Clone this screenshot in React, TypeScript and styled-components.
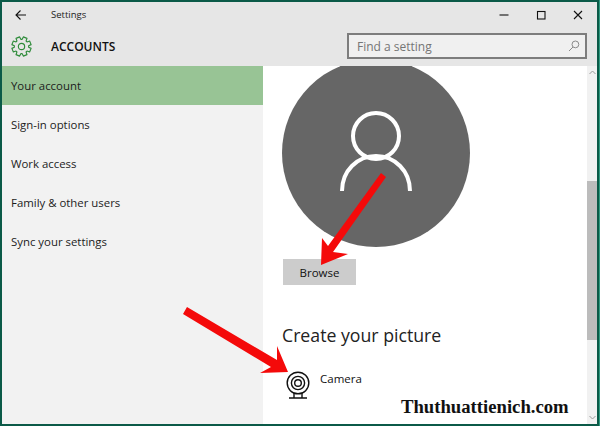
import React from 'react';
import styled, { createGlobalStyle } from 'styled-components';

const GlobalStyle = createGlobalStyle`
  html, body {
    margin: 0;
    padding: 0;
    background: #0b5a48;
  }
`;

const navItems = ['Your account', 'Sign-in options', 'Work access', 'Family & other users', 'Sync your settings'];

// 8 tooth gear outline, same shape as the settings glyph
const gearPath = () => {
  const pts: string[] = [];
  for (let i = 0; i < 8; i++) {
    const a = (i * Math.PI) / 4 + Math.PI / 8;
    const steps: [number, number][] = [
      [8.2, -0.3],
      [11.2, -0.2],
      [11.2, 0.2],
      [8.2, 0.3],
    ];
    steps.forEach(([r, d]) => {
      pts.push(`${(12 + r * Math.cos(a + d)).toFixed(2)} ${(12 + r * Math.sin(a + d)).toFixed(2)}`);
    });
  }
  return `M${pts.join('L')}Z`;
};

const App: React.FC = () => {
  return (
    <>
      <GlobalStyle />
      <Window>
        <TopArea>
          <TitleBar>
            <BackButton>
              <svg width="12" height="12" viewBox="0 0 12 12" fill="none" stroke="#111" strokeWidth="1.1">
                <path d="M11 6H1M5.5 1.5L1 6l4.5 4.5" />
              </svg>
            </BackButton>
            <TitleText>Settings</TitleText>
            <WindowControls>
              <ControlIcon>
                <svg width="10" height="10" viewBox="0 0 10 10" fill="none" stroke="#111" strokeWidth="1.1">
                  <path d="M0.5 5h9" />
                </svg>
              </ControlIcon>
              <ControlIcon>
                <svg width="10" height="10" viewBox="0 0 10 10" fill="none" stroke="#111" strokeWidth="1.1">
                  <rect x="1.5" y="1.5" width="7.5" height="7.5" />
                </svg>
              </ControlIcon>
              <ControlIcon>
                <svg width="10" height="10" viewBox="0 0 10 10" fill="none" stroke="#111" strokeWidth="1.1">
                  <path d="M1 1l8 8M9 1l-8 8" />
                </svg>
              </ControlIcon>
            </WindowControls>
          </TitleBar>
          <HeaderRow>
            <GearIcon viewBox="0 0 24 24" fill="none" stroke="#2e8b3a" strokeWidth="1.3" strokeLinejoin="round">
              <path d={gearPath()} />
              <circle cx="12" cy="12" r="3.6" />
            </GearIcon>
            <SectionTitle>ACCOUNTS</SectionTitle>
            <SearchBox>
              <SearchHint>Find a setting</SearchHint>
              <svg width="12" height="12" viewBox="0 0 12 12" fill="none" stroke="#8a8a8a" strokeWidth="1">
                <circle cx="7.4" cy="4.4" r="3.4" />
                <path d="M5 7L1 11" />
              </svg>
            </SearchBox>
          </HeaderRow>
        </TopArea>
        <Body>
          <Sidebar>
            {navItems.map((item, i) => (
              <NavItem key={item} $active={i === 0}>
                {item}
              </NavItem>
            ))}
          </Sidebar>
          <Content>
            <Avatar>
              <svg width="72" height="82" viewBox="0 0 72 82" fill="none" stroke="#fff" strokeWidth="4">
                <circle cx="36" cy="25" r="23" />
                <path d="M2 80c0-20 15-35 34-35s34 15 34 35" />
              </svg>
            </Avatar>
            <BrowseButton>Browse</BrowseButton>
            <CreateHeading>Create your picture</CreateHeading>
            <CameraRow>
              <svg width="26" height="29" viewBox="0 0 26 29" fill="none" stroke="#111" strokeWidth="1.4">
                <circle cx="13" cy="12" r="10.8" />
                <circle cx="13" cy="12" r="6.6" />
                <circle cx="13" cy="12" r="3.3" />
                <path d="M9 22v4.5M17 22v4.5M4 27h18" />
              </svg>
              <CameraLabel>Camera</CameraLabel>
            </CameraRow>
          </Content>
          <Scrollbar>
            <ScrollArrow>
              <svg width="7" height="5" viewBox="0 0 7 5" fill="none" stroke="#9a9a9a" strokeWidth="1">
                <path d="M0.5 4L3.5 1l3 3" />
              </svg>
            </ScrollArrow>
            <ScrollTrack>
              <ScrollThumb />
            </ScrollTrack>
            <ScrollArrow>
              <svg width="7" height="5" viewBox="0 0 7 5" fill="none" stroke="#9a9a9a" strokeWidth="1">
                <path d="M0.5 1L3.5 4l3-3" />
              </svg>
            </ScrollArrow>
          </Scrollbar>
        </Body>
        <ArrowLayer width="600" height="426" viewBox="0 0 600 426">
          <polygon fill="#f40a0a" points="381,173 386,177 333,252 348,254 321,265 322,238 328,246" />
          <polygon fill="#f40a0a" points="187,307 277,360 277,346 288,372 260,373 271,367 183,314" />
        </ArrowLayer>
        <Watermark>Thuthuattienich.com</Watermark>
      </Window>
    </>
  );
};

const Window = styled.div`
  position: relative;
  width: 600px;
  height: 426px;
  box-sizing: border-box;
  padding: 2px;
  display: flex;
  flex-direction: column;
  overflow: hidden;
  border-right: 1px solid #2f9a80;
  background: #0b5a48;
  font-family: 'Open Sans', 'Noto Sans', sans-serif;
  color: #111;
`;

const TopArea = styled.div`
  background: #e6e6e6;
  height: 64px;
  flex-shrink: 0;
  display: flex;
  flex-direction: column;
`;

const TitleBar = styled.div`
  height: 25px;
  display: flex;
  align-items: center;
`;

const BackButton = styled.div`
  width: 13px;
  margin-left: 13px;
  display: flex;
`;

const TitleText = styled.span`
  margin-left: 23px;
  font-size: 9.5px;
  color: #222;
`;

const WindowControls = styled.div`
  margin-left: auto;
  display: flex;
  gap: 27px;
  padding-right: 14px;
`;

const ControlIcon = styled.div`
  width: 10px;
  height: 10px;
  display: flex;
`;

const HeaderRow = styled.div`
  flex: 1;
  display: flex;
  align-items: center;
  padding: 0 10px 1px 9px;
`;

const GearIcon = styled.svg`
  width: 21px;
  height: 21px;
  flex-shrink: 0;
`;

const SectionTitle = styled.span`
  margin-left: 19px;
  font-size: 12px;
  font-weight: 600;
  color: #111;
`;

const SearchBox = styled.div`
  margin-left: auto;
  width: 240px;
  height: 26px;
  box-sizing: border-box;
  border: 2px solid #7d7d7d;
  background: #f0f0f0;
  display: flex;
  align-items: center;
  justify-content: space-between;
  padding: 0 5px 0 8px;
`;

const SearchHint = styled.span`
  font-size: 12px;
  color: #757575;
`;

const Body = styled.div`
  flex: 1;
  min-height: 0;
  display: flex;
  background: #fff;
`;

const Sidebar = styled.nav`
  width: 261px;
  flex-shrink: 0;
  background: #f2f2f2;
`;

const NavItem = styled.div<{ $active: boolean }>`
  height: 39px;
  display: flex;
  align-items: center;
  padding-left: 9px;
  font-size: 11.4px;
  color: #1c1c1c;
  background: ${props => (props.$active ? '#98c495' : 'transparent')};
`;

const Content = styled.main`
  flex: 1;
  min-width: 0;
  overflow: hidden;
  padding-left: 19px;
`;

const Avatar = styled.div`
  width: 188px;
  height: 188px;
  margin-top: -7px;
  border-radius: 50%;
  background: #666;
  display: flex;
  align-items: center;
  justify-content: center;
  padding-bottom: 2px;
  box-sizing: border-box;
`;

const BrowseButton = styled.div`
  width: 73px;
  height: 26px;
  margin: 12px 0 0 1px;
  background: #cccccc;
  display: flex;
  align-items: center;
  justify-content: center;
  font-size: 11.5px;
  color: #111;
`;

const CreateHeading = styled.h2`
  margin: 37px 0 0 0;
  font-size: 17.7px;
  line-height: 26px;
  font-weight: 400;
  color: #222;
`;

const CameraRow = styled.div`
  margin-top: 23px;
  margin-left: 3px;
  display: flex;
  align-items: flex-start;
`;

const CameraLabel = styled.span`
  margin-left: 9px;
  font-size: 11.5px;
  color: #111;
`;

const Scrollbar = styled.div`
  width: 10px;
  flex-shrink: 0;
  background: #f1f1f1;
  display: flex;
  flex-direction: column;
`;

const ScrollArrow = styled.div`
  height: 13px;
  display: flex;
  align-items: center;
  justify-content: center;
`;

const ScrollTrack = styled.div`
  flex: 1;
  padding-top: 102px;
`;

const ScrollThumb = styled.div`
  height: 159px;
  background: #bcbcbc;
`;

const ArrowLayer = styled.svg`
  position: absolute;
  left: 0;
  top: 0;
  pointer-events: none;
`;

const Watermark = styled.div`
  position: absolute;
  left: 401px;
  top: 396px;
  font-family: 'Liberation Serif', serif;
  font-size: 18.7px;
  font-weight: 700;
  color: #111;
  white-space: nowrap;
`;

export default App;
